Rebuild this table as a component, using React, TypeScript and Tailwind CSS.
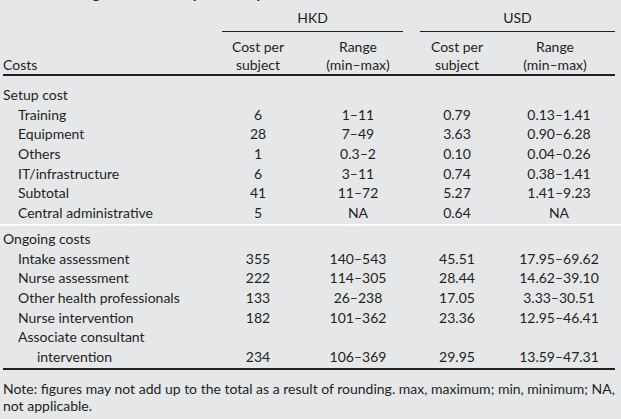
const cols = "grid grid-cols-[219px_72px_128px_70px_126px]"

type Row = { label: string; cost: string; range: string; usd: string; usdRange: string }

const setup: Row[] = [
  { label: "Training", cost: "6", range: "1–11", usd: "0.79", usdRange: "0.13–1.41" },
  { label: "Equipment", cost: "28", range: "7–49", usd: "3.63", usdRange: "0.90–6.28" },
  { label: "Others", cost: "1", range: "0.3–2", usd: "0.10", usdRange: "0.04–0.26" },
  { label: "IT/infrastructure", cost: "6", range: "3–11", usd: "0.74", usdRange: "0.38–1.41" },
  { label: "Subtotal", cost: "41", range: "11–72", usd: "5.27", usdRange: "1.41–9.23" },
  { label: "Central administrative", cost: "5", range: "NA", usd: "0.64", usdRange: "NA" },
]

const ongoing: Row[] = [
  { label: "Intake assessment", cost: "355", range: "140–543", usd: "45.51", usdRange: "17.95–69.62" },
  { label: "Nurse assessment", cost: "222", range: "114–305", usd: "28.44", usdRange: "14.62–39.10" },
  { label: "Other health professionals", cost: "133", range: "26–238", usd: "17.05", usdRange: "3.33–30.51" },
  { label: "Nurse intervention", cost: "182", range: "101–362", usd: "23.36", usdRange: "12.95–46.41" },
]

function DataRow({ label, cost, range, usd, usdRange }: Row) {
  return (
    <div className={`${cols} h-[19.7px] leading-[19.7px]`}>
      <div className="pl-[15px] whitespace-nowrap">{label}</div>
      <div className="text-center">{cost}</div>
      <div className="text-center">{range}</div>
      <div className="text-center">{usd}</div>
      <div className="text-center pl-2">{usdRange}</div>
    </div>
  )
}

export default function App() {
  return (
    <div className="w-[621px] h-[419px] overflow-hidden bg-[#e6e7e9] text-[#231f20] font-['Lato',sans-serif] text-[14px]">
      {/* title sits mostly above the crop, only descenders show */}
      <div className="-mt-[17px] h-[22px] leading-[19px] pl-[3px] font-bold text-[15px] whitespace-nowrap">
        Table 4 Average costs of the pilot study
      </div>

      <div className="px-[3px]">
        <div className={`${cols} pt-[4px] leading-[18px]`}>
          <div />
          <div className="col-span-2 mr-[19px] pb-[4px] border-b border-[#231f20] text-center">HKD</div>
          <div className="col-span-2 -ml-[2px] mr-[3px] pb-[4px] border-b border-[#231f20] text-center">USD</div>
        </div>

        <div className={`${cols} pt-[6px] leading-[18px] border-b-2 border-[#231f20] mr-[3px]`}>
          <div className="self-end">Costs</div>
          <div className="text-center">Cost per<br />subject</div>
          <div className="text-center">Range<br />(min–max)</div>
          <div className="text-center">Cost per<br />subject</div>
          <div className="text-center">Range<br />(min–max)</div>
        </div>

        <div className="pt-[9px]">
          <div className="h-[19.7px] leading-[19.7px]">Setup cost</div>
          {setup.map((r) => (
            <DataRow key={r.label} {...r} />
          ))}
        </div>
      </div>

      <div className="mt-[1px] h-[2px] bg-white" />

      <div className="px-[3px]">
        <div className="pt-[3px] border-b-2 border-[#231f20] mr-[3px] pb-[1px]">
          <div className="h-[19.7px] leading-[19.7px]">Ongoing costs</div>
          {ongoing.map((r) => (
            <DataRow key={r.label} {...r} />
          ))}
          <div className={`${cols} leading-[19.7px]`}>
            <div className="pl-[15px]">
              Associate consultant
              <div className="pl-[19px]">intervention</div>
            </div>
            <div className="text-center self-end">234</div>
            <div className="text-center self-end">106–369</div>
            <div className="text-center self-end">29.95</div>
            <div className="text-center self-end pl-2">13.59–47.31</div>
          </div>
        </div>

        <p className="pt-[10px] leading-[17px] whitespace-nowrap">
          Note: figures may not add up to the total as a result of rounding. max, maximum; min, minimum; NA,
          <br />
          not applicable.
        </p>
      </div>
    </div>
  )
}
